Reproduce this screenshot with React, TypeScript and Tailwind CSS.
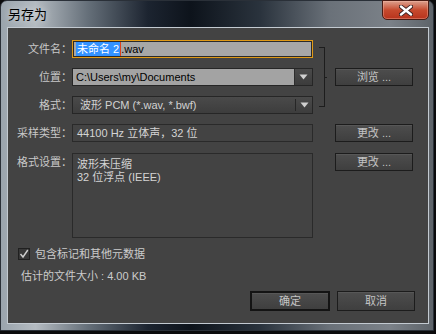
import React from "react";

function Btn({ children, def = false, w = "w-[78px]", h = "h-[18px]" }: { children: React.ReactNode; def?: boolean; w?: string; h?: string }) {
  return (
    <div
      className={`${w} ${h} flex items-center justify-center text-[11px] text-[#c4c4c4] bg-gradient-to-b from-[#4d4d4d] to-[#3f3f3f] shadow-[inset_0_1px_0_#575757] ${
        def ? "border-2 border-[#141414]" : "border border-[#1c1c1c]"
      }`}
    >
      {children}
    </div>
  );
}

function Label({ children }: { children: React.ReactNode }) {
  return <div className="w-[64px] shrink-0 text-right text-[11px] text-[#c8c8c8] leading-[18px]">{children}</div>;
}

function Arrow() {
  return (
    <svg width="9" height="6" viewBox="0 0 9 6">
      <path d="M0.5 0.5 L8.5 0.5 L4.5 5.5 Z" fill="#d0d0d0" />
    </svg>
  );
}

export default function App() {
  return (
    <div className="w-[436px] h-[334px] bg-[#0b0b0c] overflow-hidden font-['Liberation_Sans','Noto_Sans_CJK_SC',sans-serif]">
      <div className="relative w-[434px] h-[331px] rounded-t-[7px] border border-[#2a3038] bg-[linear-gradient(to_right,#9aa4ad_0%,#b4bbc1_8%,#66707a_20%,#1c2430_34%,#0d131b_44%,#2a333d_60%,#6a7179_76%,#7b8188_90%,#5d6369_100%)] pt-[26px] pl-[6px] pr-[4px] pb-[6px]">
        {/* title */}
        <div className="absolute left-[7px] top-[5px] text-[13px] leading-[16px] text-black [text-shadow:0_0_6px_rgba(255,255,255,0.7)] font-['Noto_Sans_CJK_SC',sans-serif]">
          另存为
        </div>
        {/* close button */}
        <div className="absolute right-[4px] top-[-1px] w-[47px] h-[20px] rounded-b-[5px] border border-[#4a1c14] bg-gradient-to-b from-[#dba08e] via-[#c64a2e] to-[#b8321c] flex items-center justify-center shadow-[inset_0_0_0_1px_rgba(255,200,180,0.35)]">
          <svg width="14" height="11" viewBox="0 0 14 11">
            <path d="M2 1.5 L12 9.5 M12 1.5 L2 9.5" stroke="#3a2020" strokeWidth="4.2" strokeLinecap="round" />
            <path d="M2 1.5 L12 9.5 M12 1.5 L2 9.5" stroke="#ffffff" strokeWidth="2.4" strokeLinecap="round" />
          </svg>
        </div>

        {/* inner panel */}
        <div className="w-full h-full border border-[#c3cad1] bg-[#434343] pt-[12px] text-[11px]">
          <div className="flex items-start">
            <div className="flex flex-col gap-[10px]">
              <div className="flex">
                <Label>文件名：</Label>
                <div className="w-[241px] h-[18px] border border-[#e09a16] bg-[#a7a7a7] shadow-[inset_0_0_0_1px_#2a2a2a] flex items-center pl-[3px] text-black">
                  <span className="bg-[#3392ff] text-white px-[1px] leading-[14px]">未命名 2</span>
                  <span className="w-[1px] h-[14px] bg-[#e0401a]" />
                  <span className="leading-[14px]">.wav</span>
                </div>
              </div>
              <div className="flex">
                <Label>位置：</Label>
                <div className="w-[241px] h-[18px] border border-[#262626] bg-[#3e3e3e] flex">
                  <div className="w-[222px] h-full bg-[#a3a3a3] border-r border-[#2d2d2d] flex items-center pl-[3px] text-black">
                    C:\Users\my\Documents
                  </div>
                  <div className="flex-1 flex items-center justify-center bg-gradient-to-b from-[#4a4a4a] to-[#3c3c3c]">
                    <Arrow />
                  </div>
                </div>
              </div>
              <div className="flex">
                <Label>格式：</Label>
                <div className="w-[241px] h-[18px] border border-[#262626] bg-gradient-to-b from-[#4a4a4a] to-[#3d3d3d] flex">
                  <div className="w-[222px] h-full flex items-center pl-[7px] text-[#d2d2d2]">
                    波形 PCM (*.wav, *.bwf)
                  </div>
                  <div className="w-[1px] h-[12px] self-center bg-[#262626]" />
                  <div className="flex-1 flex items-center justify-center">
                    <Arrow />
                  </div>
                </div>
              </div>
            </div>
            <div className="relative ml-[6px] mt-[7px] w-[6px] h-[60px] border-t border-r border-b border-[#1d1d1d]">
              <div className="absolute right-[-3px] top-[29px] w-[3px] h-[1px] bg-[#1d1d1d]" />
            </div>
            <div className="ml-[10px] mt-[28px]">
              <Btn>浏览 ...</Btn>
            </div>
          </div>

          <div className="flex mt-[10px]">
            <Label>采样类型：</Label>
            <div className="w-[241px] h-[18px] border border-[#2a2a2a] bg-[#434343] flex items-center pl-[4px] text-[#d4d4d4]">
              44100 Hz 立体声，32 位
            </div>
            <div className="ml-[22px]">
              <Btn>更改 ...</Btn>
            </div>
          </div>

          <div className="flex mt-[11px]">
            <Label>格式设置：</Label>
            <div className="w-[241px] h-[85px] border border-[#2a2a2a] bg-[#434343] pl-[4px] pt-[4px] leading-[13px] text-[#d4d4d4]">
              <div>波形未压缩</div>
              <div>32 位浮点 (IEEE)</div>
            </div>
            <div className="ml-[22px]">
              <Btn>更改 ...</Btn>
            </div>
          </div>

          <div className="flex items-center mt-[10px] pl-[10px] h-[12px]">
            <div className="w-[12px] h-[12px] border border-[#202020] bg-[#383838] flex items-center justify-center">
              <svg width="10" height="10" viewBox="0 0 10 10">
                <path d="M1.5 5 L4 8 L8.8 1" stroke="#cfcfcf" strokeWidth="1.4" fill="none" />
              </svg>
            </div>
            <div className="ml-[5px] text-[#cccccc]">包含标记和其他元数据</div>
          </div>

          <div className="mt-[10px] pl-[13px] leading-[13px] text-[#cccccc]">估计的文件大小 : 4.00 KB</div>

          <div className="flex justify-end gap-[7px] mt-[8px] pr-[13px]">
            <Btn def w="w-[80px]" h="h-[20px]">确定</Btn>
            <Btn w="w-[78px]" h="h-[20px]">取消</Btn>
          </div>
        </div>
      </div>
    </div>
  );
}
